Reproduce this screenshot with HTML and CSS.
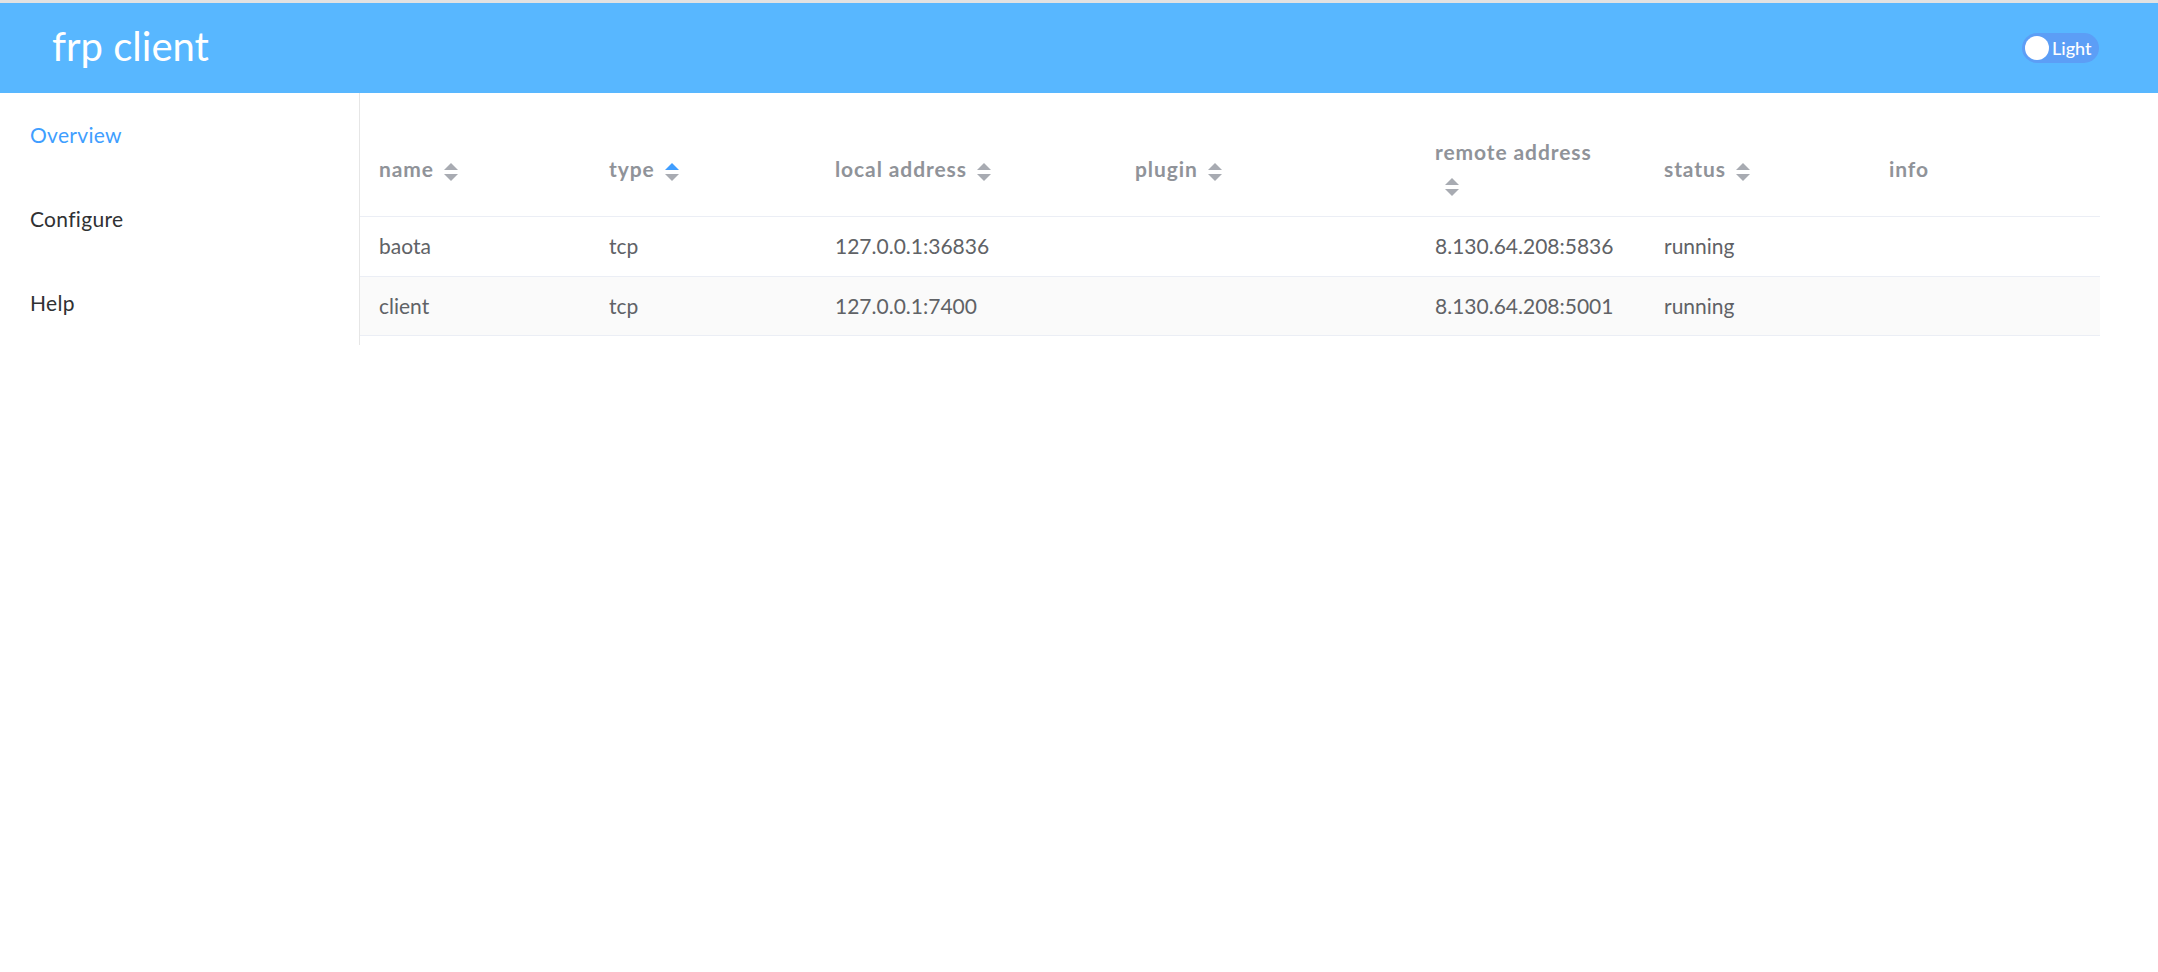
FILE: index.html
```html
<!DOCTYPE html>
<html lang="en">
<head>
<meta charset="utf-8">
<title>frp client</title>
<link rel="stylesheet" href="styles.css">
</head>
<body>
<header class="topbar">
  <div class="brand">frp client</div>
  <div class="theme-switch">
    <span class="knob"></span>
    <span class="switch-label">Light</span>
  </div>
</header>
<div class="layout">
  <nav class="sidebar">
    <ul class="menu">
      <li class="menu-item active">Overview</li>
      <li class="menu-item">Configure</li>
      <li class="menu-item">Help</li>
    </ul>
  </nav>
  <main class="content">
    <table class="proxy-table">
      <colgroup>
        <col class="col-name">
        <col class="col-type">
        <col class="col-local">
        <col class="col-plugin">
        <col class="col-remote">
        <col class="col-status">
        <col class="col-info">
      </colgroup>
      <thead>
        <tr>
          <th>name<span class="caret"><i class="up"></i><i class="down"></i></span></th>
          <th>type<span class="caret"><i class="up on"></i><i class="down"></i></span></th>
          <th>local address<span class="caret"><i class="up"></i><i class="down"></i></span></th>
          <th>plugin<span class="caret"><i class="up"></i><i class="down"></i></span></th>
          <th>remote address<span class="caret caret-wrap"><i class="up"></i><i class="down"></i></span></th>
          <th>status<span class="caret"><i class="up"></i><i class="down"></i></span></th>
          <th>info</th>
        </tr>
      </thead>
      <tbody>
        <tr>
          <td>baota</td>
          <td>tcp</td>
          <td>127.0.0.1:36836</td>
          <td></td>
          <td>8.130.64.208:5836</td>
          <td>running</td>
          <td></td>
        </tr>
        <tr class="striped">
          <td>client</td>
          <td>tcp</td>
          <td>127.0.0.1:7400</td>
          <td></td>
          <td>8.130.64.208:5001</td>
          <td>running</td>
          <td></td>
        </tr>
      </tbody>
    </table>
  </main>
</div>
</body>
</html>
```

FILE: styles.css
```css
html, body {
  margin: 0;
  padding: 0;
  background: #ffffff;
  font-family: Lato, "Open Sans", "Liberation Sans", sans-serif;
}

.topbar {
  display: flex;
  align-items: center;
  justify-content: space-between;
  height: 90px;
  border-top: 3px solid #e2e2e2;
  background: #58b7ff;
  padding: 0 59px 0 52px;
}

.brand {
  color: #ffffff;
  font-size: 40px;
  padding-bottom: 4px;
}

.theme-switch {
  display: flex;
  align-items: center;
  width: 77px;
  height: 30px;
  box-sizing: border-box;
  padding-left: 3px;
  border-radius: 15px;
  background: #5c9ef6;
}

.knob {
  width: 24px;
  height: 24px;
  border-radius: 50%;
  background: #ffffff;
  flex: none;
}

.switch-label {
  margin-left: 3px;
  color: #ffffff;
  font-size: 18px;
  font-weight: 500;
}

.layout {
  display: flex;
  align-items: flex-start;
}

.sidebar {
  width: 359px;
  border-right: 1px solid #e6e6e6;
  flex: none;
}

.menu {
  list-style: none;
  margin: 0;
  padding: 0;
}

.menu-item {
  height: 84px;
  line-height: 84px;
  padding-left: 30px;
  font-size: 21px;
  letter-spacing: 0.3px;
  color: #303133;
}

.menu-item.active {
  color: #409eff;
}

.content {
  flex: 1;
  padding: 30px 58px 0 0;
}

.proxy-table {
  width: 100%;
  border-collapse: collapse;
  table-layout: fixed;
  font-size: 21px;
}

.col-name { width: 230px; }
.col-type { width: 226px; }
.col-local { width: 300px; }
.col-plugin { width: 300px; }
.col-remote { width: 229px; }
.col-status { width: 225px; }
.col-info { width: 230px; }

.proxy-table th,
.proxy-table td {
  padding: 12px 19px;
  line-height: 34.5px;
  text-align: left;
  vertical-align: middle;
  border-bottom: 1px solid #ebeef5;
}

.proxy-table th {
  color: #909399;
  font-weight: 700;
  letter-spacing: 0.9px;
}

.proxy-table td {
  color: #606266;
}

.proxy-table tr.striped td {
  background: #fafafa;
}

.caret {
  display: inline-flex;
  flex-direction: column;
  align-items: center;
  gap: 4px;
  margin-left: 10px;
  vertical-align: middle;
}

.caret-wrap {
  display: flex;
  width: 14px;
  height: 34.5px;
  justify-content: center;
  margin-left: 10px;
}

.caret i {
  display: block;
  width: 0;
  height: 0;
  border-left: 7px solid transparent;
  border-right: 7px solid transparent;
}

.caret .up {
  border-bottom: 7px solid #a8abb2;
}

.caret .up.on {
  border-bottom-color: #409eff;
}

.caret .down {
  border-top: 7px solid #a8abb2;
}
```
